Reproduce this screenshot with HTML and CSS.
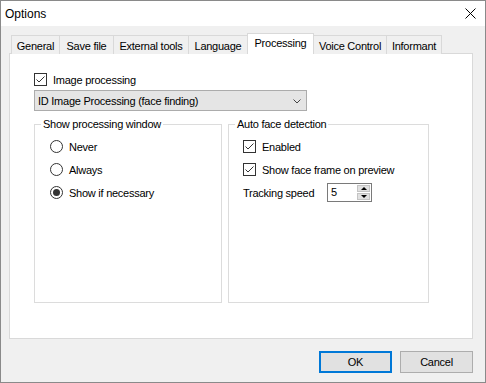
FILE: index.html
```html
<!DOCTYPE html>
<html lang="en">
<head>
  <meta charset="UTF-8">
  <title>Options</title>
  <link rel="stylesheet" href="styles.css">
</head>
<body>
  <div class="window">

    <div class="titlebar">
      <span class="title">Options</span>
      <svg class="close" width="11" height="11" viewBox="0 0 11 11">
        <path d="M0.5 0.5 L10.5 10.5 M10.5 0.5 L0.5 10.5" stroke="#000" stroke-width="1" fill="none"/>
      </svg>
    </div>

    <div class="client">
      <div class="tabs">
        <div class="tab tab-general">General</div>
        <div class="tab tab-save">Save file</div>
        <div class="tab tab-external">External tools</div>
        <div class="tab tab-language">Language</div>
        <div class="tab tab-processing active">Processing</div>
        <div class="tab tab-voice">Voice Control</div>
        <div class="tab tab-informant">Informant</div>
      </div>

      <div class="panel">
        <div class="row">
          <span class="check on"></span>
          <span>Image processing</span>
        </div>

        <div class="combo">
          <span>ID Image Processing (face finding)</span>
          <svg class="chevron" width="8" height="5" viewBox="0 0 8 5">
            <path d="M0.5 0.5 L4 4 L7.5 0.5" stroke="#444" stroke-width="1" fill="none"/>
          </svg>
        </div>

        <div class="groups">
          <fieldset class="group group-window">
            <legend>Show processing window</legend>
            <div class="group-body">
              <div class="row"><span class="radio"></span><span>Never</span></div>
              <div class="row"><span class="radio"></span><span>Always</span></div>
              <div class="row"><span class="radio on"></span><span>Show if necessary</span></div>
            </div>
          </fieldset>

          <fieldset class="group group-face">
            <legend>Auto face detection</legend>
            <div class="group-body">
              <div class="row"><span class="check on"></span><span>Enabled</span></div>
              <div class="row"><span class="check on"></span><span>Show face frame on preview</span></div>
              <div class="row">
                <span class="spin-label">Tracking speed</span>
                <div class="spin">
                  <span class="spin-value">5</span>
                  <div class="spin-buttons">
                    <span class="spin-btn up"></span>
                    <span class="spin-btn down"></span>
                  </div>
                </div>
              </div>
            </div>
          </fieldset>
        </div>
      </div>

      <div class="buttons">
        <button class="btn default">OK</button>
        <button class="btn">Cancel</button>
      </div>
    </div>

  </div>
</body>
</html>
```

FILE: styles.css
```css
body {
  margin: 0;
  font-family: "Liberation Sans", Arial, sans-serif;
  font-size: 11px;
  letter-spacing: -0.25px;
  color: #000;
}

.window {
  width: 486px;
  height: 383px;
  box-sizing: border-box;
  border: 1px solid #8a8a8a;
  background: #f0f0f0;
  display: flex;
  flex-direction: column;
}

.titlebar {
  height: 25px;
  background: #ffffff;
  display: flex;
  align-items: center;
  justify-content: space-between;
  padding: 0 9px 0 4px;
}

.title {
  font-size: 12px;
  letter-spacing: 0;
}

.client {
  padding: 8px 0 0 8px;
}

/* tab strip */
.tabs {
  height: 20px;
  display: flex;
  align-items: flex-end;
  padding-left: 2px;
  margin-bottom: -1px;
}

.tab {
  box-sizing: border-box;
  height: 19px;
  margin-right: -1px;
  border: 1px solid #d9d9d9;
  border-bottom: none;
  background: #f0f0f0;
  display: flex;
  align-items: center;
  justify-content: center;
  padding-top: 1px;
}

.tab.active {
  height: 21px;
  background: #ffffff;
  position: relative;
  z-index: 1;
  padding-top: 0;
  padding-bottom: 3px;
}

.tab-general { width: 49px; }
.tab-save { width: 55px; }
.tab-external { width: 76px; }
.tab-language { width: 60px; }
.tab-processing { width: 67px; }
.tab-voice { width: 74px; }
.tab-informant { width: 56px; }

.panel {
  box-sizing: border-box;
  width: 464px;
  height: 286px;
  border: 1px solid #d9d9d9;
  background: #ffffff;
  padding: 17px 0 0 24px;
}

.row {
  height: 17px;
  display: flex;
  align-items: center;
  gap: 6px;
}

/* checkbox and radio */
.check,
.radio {
  box-sizing: border-box;
  width: 13px;
  height: 13px;
  flex: none;
  border: 1px solid #333333;
  background: #ffffff;
}

.check.on {
  background: #ffffff url("data:image/svg+xml;utf8,<svg xmlns='http://www.w3.org/2000/svg' width='11' height='11'><path d='M1.5 5.5 L4 8 L9.5 2.5' stroke='%23333' stroke-width='1' fill='none'/></svg>") no-repeat center;
}

.radio {
  border-radius: 50%;
  display: flex;
  align-items: center;
  justify-content: center;
}

.radio.on::after {
  content: "";
  width: 7px;
  height: 7px;
  border-radius: 50%;
  background: #333333;
}

/* combo box */
.combo {
  box-sizing: border-box;
  width: 273px;
  height: 21px;
  margin-top: 2px;
  border: 1px solid #acacac;
  background: #e5e5e5;
  display: flex;
  align-items: center;
  justify-content: space-between;
  padding: 0 5px 0 3px;
}

.chevron {
  margin-top: 1px;
}

/* group boxes */
.groups {
  display: flex;
  gap: 6px;
  margin-top: 5px;
}

.group {
  box-sizing: border-box;
  height: 187px;
  margin: 0;
  padding: 0;
  border: 1px solid #dcdcdc;
}

.group legend {
  padding: 0 2px;
  margin-left: 6px;
  line-height: 16px;
}

.group-body {
  padding: 6px 0 0 15px;
  display: flex;
  flex-direction: column;
  gap: 6px;
}

.group-window { width: 188px; }
.group-face { width: 201px; }

.group-face .group-body {
  padding-left: 14px;
}

/* spin box */
.spin-label {
  width: 78px;
}

.spin {
  box-sizing: border-box;
  width: 45px;
  height: 19px;
  border: 1px solid #7a7a7a;
  background: #ffffff;
  display: flex;
  justify-content: space-between;
  padding: 1px;
}

.spin-value {
  padding-left: 2px;
  line-height: 15px;
}

.spin-buttons {
  width: 13px;
  display: flex;
  flex-direction: column;
  gap: 1px;
}

.spin-btn {
  flex: 1;
  background: #e1e1e1;
  border: 1px solid #c4c4c4;
  box-sizing: border-box;
  display: flex;
  align-items: center;
  justify-content: center;
}

.spin-btn.up::after {
  content: "";
  border-left: 3px solid transparent;
  border-right: 3px solid transparent;
  border-bottom: 3px solid #000;
}

.spin-btn.down::after {
  content: "";
  border-left: 3px solid transparent;
  border-right: 3px solid transparent;
  border-top: 3px solid #000;
}

/* dialog buttons */
.buttons {
  width: 464px;
  margin-top: 12px;
  display: flex;
  justify-content: flex-end;
  gap: 8px;
}

.btn {
  box-sizing: border-box;
  width: 73px;
  height: 22px;
  margin: 0;
  padding: 0;
  border: 1px solid #adadad;
  background: #e1e1e1;
  font-family: inherit;
  font-size: 11px;
  letter-spacing: -0.25px;
  color: #000;
}

.btn.default {
  border: 2px solid #0078d7;
}
```
